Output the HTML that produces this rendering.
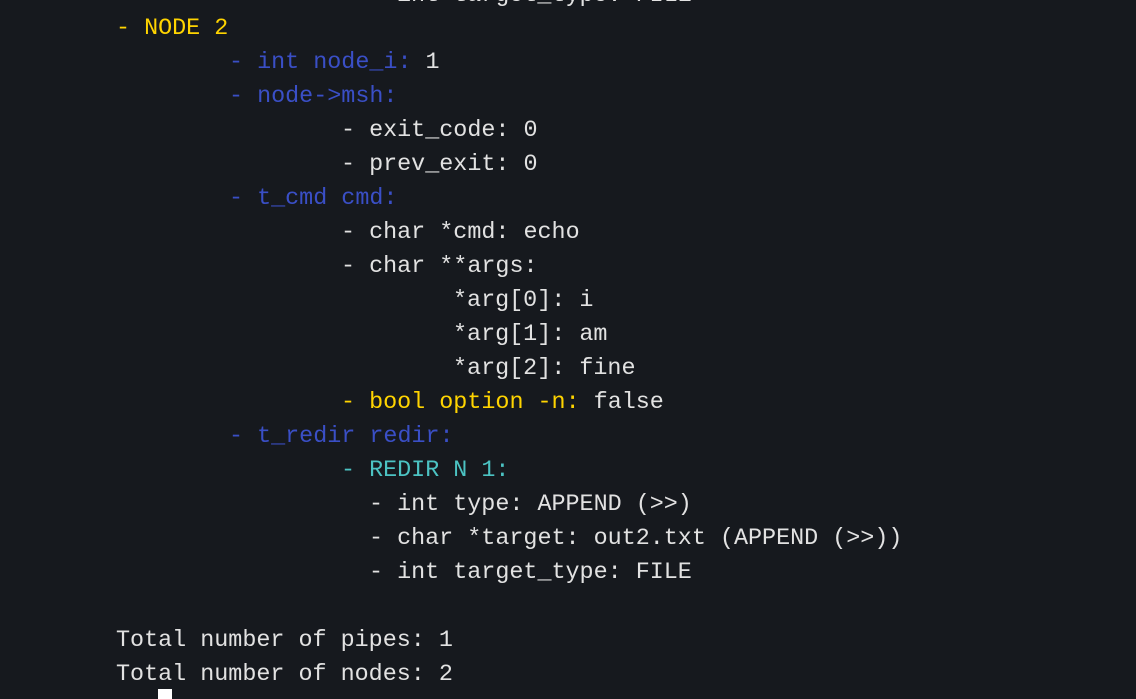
<!DOCTYPE html>
<html><head><meta charset="utf-8"><style>
html,body{margin:0;padding:0;background:#16191e;width:1136px;height:694px;overflow:hidden}
.l{position:absolute;font-family:"Liberation Mono",monospace;font-size:23.4px;line-height:34px;white-space:pre;color:#e2e2e2}
.y{color:#ffd400}.b{color:#3a4fc6}.c{color:#4cc3c3}
</style></head><body>
<div class="l" style="left:397px;top:-21px">int target_type: FILE</div>
<div class="l y" style="left:116px;top:12px">- NODE 2</div>
<div class="l" style="left:229px;top:46px"><span class="b">- int node_i:</span> 1</div>
<div class="l b" style="left:229px;top:80px">- node-&gt;msh:</div>
<div class="l" style="left:341px;top:114px">- exit_code: 0</div>
<div class="l" style="left:341px;top:148px">- prev_exit: 0</div>
<div class="l b" style="left:229px;top:182px">- t_cmd cmd:</div>
<div class="l" style="left:341px;top:216px">- char *cmd: echo</div>
<div class="l" style="left:341px;top:250px">- char **args:</div>
<div class="l" style="left:453px;top:284px">*arg[0]: i</div>
<div class="l" style="left:453px;top:318px">*arg[1]: am</div>
<div class="l" style="left:453px;top:352px">*arg[2]: fine</div>
<div class="l" style="left:341px;top:386px"><span class="y">- bool option -n:</span> false</div>
<div class="l b" style="left:229px;top:420px">- t_redir redir:</div>
<div class="l c" style="left:341px;top:454px">- REDIR N 1:</div>
<div class="l" style="left:369px;top:488px">- int type: APPEND (&gt;&gt;)</div>
<div class="l" style="left:369px;top:522px">- char *target: out2.txt (APPEND (&gt;&gt;))</div>
<div class="l" style="left:369px;top:556px">- int target_type: FILE</div>
<div class="l" style="left:116px;top:624px">Total number of pipes: 1</div>
<div class="l" style="left:116px;top:658px">Total number of nodes: 2</div>
<div style="position:absolute;left:158px;top:689px;width:14px;height:10px;background:#fff"></div>
</body></html>
